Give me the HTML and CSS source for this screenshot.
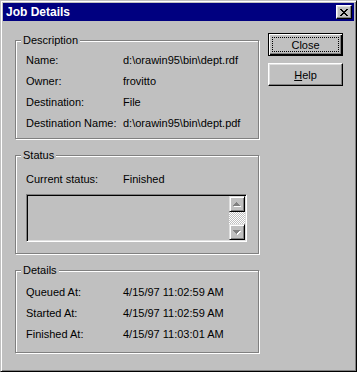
FILE: index.html
```html
<!DOCTYPE html>
<html lang="en">
<head>
    <meta charset="UTF-8">
    <title>Job Details</title>
    <link rel="stylesheet" href="styles.css">
</head>
<body>
    <div class="dialog">
        <div class="titlebar">
            <span class="title">Job Details</span>
            <button class="title-close" aria-label="Close">
                <svg width="8" height="7" viewBox="0 0 8 7" shape-rendering="crispEdges">
                    <path d="M0 0h2v1h-2zM6 0h2v1h-2zM1 1h2v1h-2zM5 1h2v1h-2zM2 2h4v1h-4zM3 3h2v1h-2zM2 4h4v1h-4zM1 5h2v1h-2zM5 5h2v1h-2zM0 6h2v1h-2zM6 6h2v1h-2z" fill="#000"/>
                </svg>
            </button>
        </div>

        <div class="dialog-body">
            <div class="groups">
                <div class="group group-description">
                    <span class="group-title">Description</span>
                    <div class="rows">
                        <span>Name:</span><span>d:\orawin95\bin\dept.rdf</span>
                        <span>Owner:</span><span>frovitto</span>
                        <span>Destination:</span><span>File</span>
                        <span>Destination Name:</span><span>d:\orawin95\bin\dept.pdf</span>
                    </div>
                </div>

                <div class="group group-status">
                    <span class="group-title">Status</span>
                    <div class="rows">
                        <span>Current status:</span><span>Finished</span>
                    </div>
                    <div class="listbox">
                        <div class="scrollbar">
                            <div class="scroll-btn">
                                <svg width="8" height="5" viewBox="0 0 8 5" shape-rendering="crispEdges">
                                    <path d="M4 1h1v1h-1zM3 2h3v1h-3zM2 3h5v1h-5zM1 4h7v1h-7z" fill="#fff"/>
                                    <path d="M3 0h1v1h-1zM2 1h3v1h-3zM1 2h5v1h-5zM0 3h7v1h-7z" fill="#808080"/>
                                </svg>
                            </div>
                            <div class="scroll-track"></div>
                            <div class="scroll-btn">
                                <svg width="8" height="5" viewBox="0 0 8 5" shape-rendering="crispEdges">
                                    <path d="M1 1h7v1h-7zM2 2h5v1h-5zM3 3h3v1h-3zM4 4h1v1h-1z" fill="#fff"/>
                                    <path d="M0 0h7v1h-7zM1 1h5v1h-5zM2 2h3v1h-3zM3 3h1v1h-1z" fill="#808080"/>
                                </svg>
                            </div>
                        </div>
                    </div>
                </div>

                <div class="group group-details">
                    <span class="group-title">Details</span>
                    <div class="rows">
                        <span>Queued At:</span><span>4/15/97 11:02:59 AM</span>
                        <span>Started At:</span><span>4/15/97 11:02:59 AM</span>
                        <span>Finished At:</span><span>4/15/97 11:03:01 AM</span>
                    </div>
                </div>
            </div>

            <div class="buttons">
                <button class="btn btn-default"><span class="focus">Close</span></button>
                <button class="btn"><span class="focus-none"><u>H</u>elp</span></button>
            </div>
        </div>
    </div>
</body>
</html>
```

FILE: styles.css
```css
body {
    margin: 0;
    background: #fff;
    font-family: "Liberation Sans", Arial, sans-serif;
    font-size: 11px;
    color: #000;
}

.dialog {
    width: 357px;
    height: 372px;
    box-sizing: border-box;
    padding: 2px;
    background: #c0c0c0;
    border: 1px solid;
    border-color: #c0c0c0 #000 #000 #c0c0c0;
    box-shadow: inset 1px 1px #fff, inset -1px -1px #808080;
}

.titlebar {
    height: 18px;
    padding: 0 2px;
    display: flex;
    align-items: center;
    justify-content: space-between;
    background: #000080;
    color: #fff;
}
.title {
    font-size: 12px;
    font-weight: bold;
    padding-left: 1px;
}
.title-close {
    width: 16px;
    height: 14px;
    padding: 0;
    box-sizing: border-box;
    display: flex;
    align-items: center;
    justify-content: center;
    background: #c0c0c0;
    border: 1px solid;
    border-color: #fff #000 #000 #fff;
    box-shadow: inset -1px -1px #808080, inset 1px 1px #dfdfdf;
}

.dialog-body {
    display: flex;
    align-items: flex-start;
    padding-left: 12px;
}

.groups {
    width: 244px;
    padding-top: 19px;
}

.group {
    position: relative;
    border: 1px solid #808080;
    box-shadow: inset 1px 1px #fff, 1px 1px #fff;
    padding-left: 10px;
}
.group-title {
    position: absolute;
    top: -7px;
    left: 5px;
    padding: 0 2px;
    line-height: 13px;
    background: #c0c0c0;
}
.group-description {
    height: 99px;
    box-sizing: border-box;
    padding-top: 9px;
}
.group-status {
    height: 99px;
    box-sizing: border-box;
    padding-top: 13px;
    margin-top: 16px;
}
.group-details {
    height: 83px;
    box-sizing: border-box;
    padding-top: 11px;
    margin-top: 16px;
}

.rows {
    display: grid;
    grid-template-columns: 97px 1fr;
    line-height: 21px;
    white-space: nowrap;
}

.listbox {
    width: 221px;
    height: 48px;
    margin-top: 4px;
    box-sizing: border-box;
    padding: 1px;
    display: flex;
    justify-content: flex-end;
    border: 1px solid;
    border-color: #808080 #fff #fff #808080;
    box-shadow: inset 1px 1px #000, inset -1px -1px #dfdfdf;
}
.scrollbar {
    width: 16px;
    display: flex;
    flex-direction: column;
}
.scroll-btn {
    height: 16px;
    box-sizing: border-box;
    display: flex;
    align-items: center;
    justify-content: center;
    background: #c0c0c0;
    border: 1px solid;
    border-color: #dfdfdf #000 #000 #dfdfdf;
    box-shadow: inset 1px 1px #fff, inset -1px -1px #808080;
}
.scroll-track {
    flex: 1;
    background: repeating-conic-gradient(#fff 0 25%, #c0c0c0 0 50%) 0 0 / 2px 2px;
}

.buttons {
    display: flex;
    flex-direction: column;
    gap: 7px;
    margin-left: 9px;
    padding-top: 12px;
}
.btn {
    width: 75px;
    height: 23px;
    box-sizing: border-box;
    padding: 3px;
    display: flex;
    font-family: inherit;
    font-size: 11px;
    color: #000;
    background: #c0c0c0;
    border: 1px solid;
    border-color: #fff #000 #000 #fff;
    box-shadow: inset -1px -1px #808080, inset 1px 1px #dfdfdf;
}
.btn-default {
    border-color: #000;
    box-shadow: inset 1px 1px #fff, inset -1px -1px #000, inset -2px -2px #808080;
}
.focus,
.focus-none {
    flex: 1;
    display: flex;
    align-items: center;
    justify-content: center;
    border: 1px dotted #000;
}
.focus-none {
    border-color: transparent;
}
```
